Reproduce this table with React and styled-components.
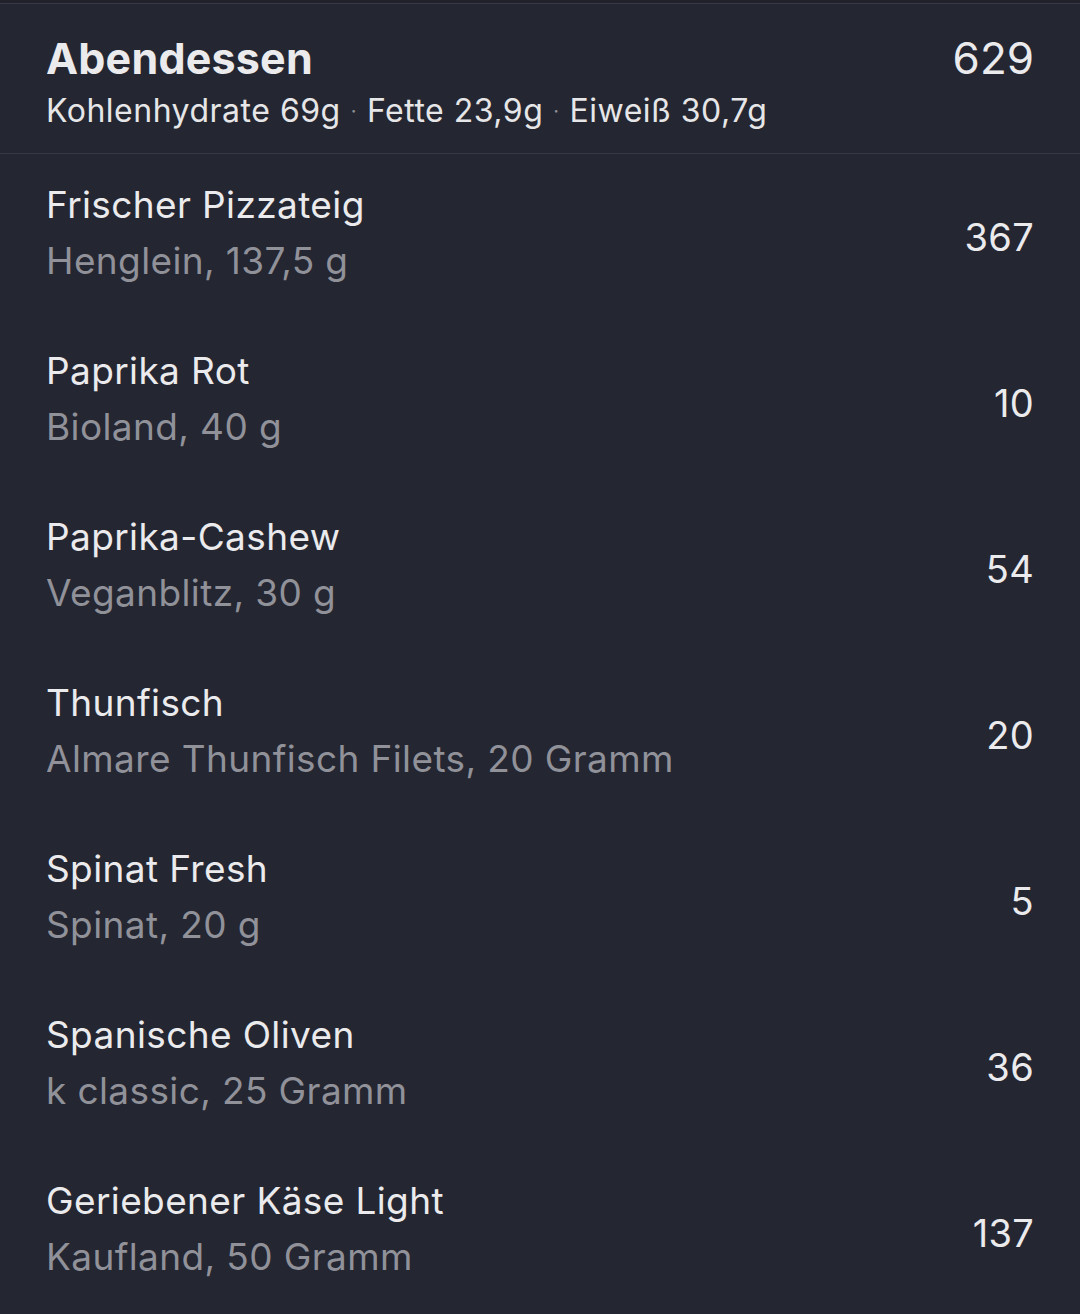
import React from "react";
import styled, { createGlobalStyle } from "styled-components";

const Global = createGlobalStyle`
  html, body { margin: 0; padding: 0; background: #242631; }
  body { font-family: Inter, "Noto Sans", "Liberation Sans", sans-serif; -webkit-font-smoothing: antialiased; }
`;

const Page = styled.div`
  width: 1080px;
  min-height: 1314px;
  background: #242631;
  border-top: 3px solid #20212a;
  box-sizing: border-box;
`;

const Header = styled.header`
  display: flex;
  justify-content: space-between;
  align-items: flex-start;
  padding: 29px 46px 21px 46px;
  border-top: 1px solid #363845;
  border-bottom: 1px solid #363845;
`;

const HeaderText = styled.div`
  display: flex;
  flex-direction: column;
  gap: 7px;
`;

const Title = styled.h1`
  margin: 0;
  font-size: 43px;
  line-height: 50px;
  font-weight: 700;
  letter-spacing: 0.2px;
  color: #ebebed;
`;

const Macros = styled.div`
  font-size: 32px;
  line-height: 42px;
  letter-spacing: 0.5px;
  color: #e6e6e8;
  display: flex;
  align-items: center;
`;

const Dot = styled.span`
  color: #8e8f96;
  font-size: 20px;
  margin: 0 10px;
`;

const Total = styled.div`
  font-size: 44px;
  line-height: 50px;
  color: #ebebed;
`;

const List = styled.ul`
  list-style: none;
  margin: 0;
  padding: 0;
`;

const Row = styled.li`
  height: 166px;
  display: flex;
  align-items: center;
  justify-content: space-between;
  padding: 0 46px;
`;

const ItemText = styled.div`
  display: flex;
  flex-direction: column;
  gap: 10px;
  margin-top: -8px;
`;

const Name = styled.div`
  font-size: 37px;
  line-height: 46px;
  letter-spacing: 0.38px;
  color: #ebebed;
`;

const Detail = styled(Name)`
  color: #909199;
`;

const Kcal = styled.div`
  font-size: 38px;
  line-height: 46px;
  letter-spacing: 0.3px;
  color: #ebebed;
`;

const items = [
  ["Frischer Pizzateig", "Henglein, 137,5 g", "367"],
  ["Paprika Rot", "Bioland, 40 g", "10"],
  ["Paprika-Cashew", "Veganblitz, 30 g", "54"],
  ["Thunfisch", "Almare Thunfisch Filets, 20 Gramm", "20"],
  ["Spinat Fresh", "Spinat, 20 g", "5"],
  ["Spanische Oliven", "k classic, 25 Gramm", "36"],
  ["Geriebener Käse Light", "Kaufland, 50 Gramm", "137"],
];

export default function App() {
  return (
    <>
      <Global />
      <Page>
        <Header>
          <HeaderText>
            <Title>Abendessen</Title>
            <Macros>
              Kohlenhydrate 69g<Dot>·</Dot>Fette 23,9g<Dot>·</Dot>Eiweiß 30,7g
            </Macros>
          </HeaderText>
          <Total>629</Total>
        </Header>
        <List>
          {items.map(([n, d, k]) => (
            <Row key={n}>
              <ItemText>
                <Name>{n}</Name>
                <Detail>{d}</Detail>
              </ItemText>
              <Kcal>{k}</Kcal>
            </Row>
          ))}
        </List>
      </Page>
    </>
  );
}
